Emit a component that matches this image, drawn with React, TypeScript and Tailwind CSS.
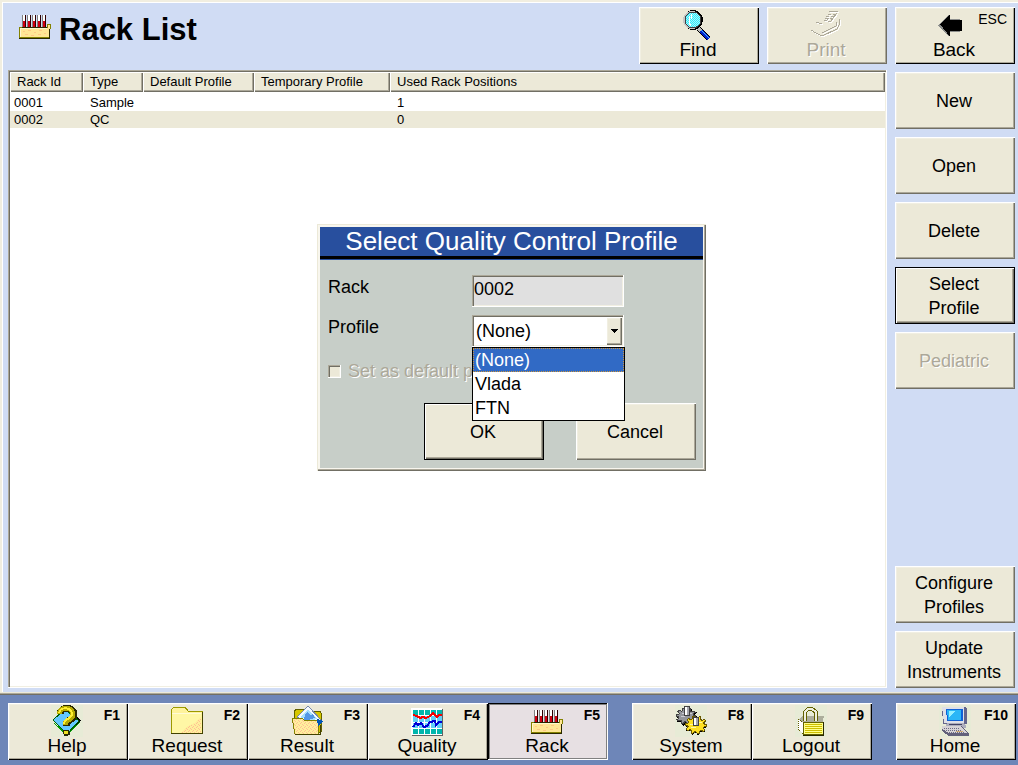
import { useState, type ReactNode } from 'react';
import clsx from 'clsx';

const racks = [
    { id: '0001', type: 'Sample', defaultProfile: '', temporaryProfile: '', used: 1 },
    { id: '0002', type: 'QC', defaultProfile: '', temporaryProfile: '', used: 0 },
];

const profiles = ['(None)', 'Vlada', 'FTN'];

const raised = 'shadow-[inset_1px_1px_0_#fff,inset_-1px_-1px_0_#716f64,inset_-2px_-2px_0_#aca899,inset_2px_2px_0_#f1efe2]';
const raisedBlack = 'shadow-[inset_1px_1px_0_#fff,inset_-1px_-1px_0_#000,inset_-2px_-2px_0_#aca899,inset_2px_2px_0_#f1efe2]';
const focused = 'shadow-[inset_0_0_0_1px_#000,inset_2px_2px_0_#fff,inset_-2px_-2px_0_#716f64,inset_-3px_-3px_0_#aca899]';
const pressed = 'shadow-[inset_-1px_-1px_0_#fff,inset_1px_1px_0_#000,inset_2px_2px_0_#808080,inset_-2px_-2px_0_#808080]';
const sunken = 'shadow-[inset_-1px_-1px_0_#fff,inset_1px_1px_0_#aca899,inset_2px_2px_0_#716f64,inset_-2px_-2px_0_#f1efe2]';
const disabledText = 'text-[#aca899] [text-shadow:1px_1px_0_#fff]';

function Icon({ children }: { children: ReactNode }) {
    return (
        <svg className="w-8 h-8 shrink-0" viewBox="0 0 32 32" fill="none" shapeRendering="crispEdges" aria-hidden="true">
            {children}
        </svg>
    );
}

function RackShape() {
    return (
        <>
            {[3, 8, 13, 18, 23].map((x) => (
                <g key={x}>
                    <path d={`M${x} 0h4v12h-4z`} fill="#808080" />
                    <path d={`M${x + 1} 0h2v6h-2z`} fill="#fff" />
                    <path d={`M${x + 1} 6h2v6h-2z`} fill="#d00010" />
                    <path d={`M${x + 3} 0h1v12h-1z`} fill="#300000" />
                </g>
            ))}
            <path d="M0 12h28V9h4v5h-1v10H0z" fill="#848200" />
            <path d="M1 13h28v-3h2v4h-1v8H1z" fill="#ffe794" />
            <path d="M1 13h27v1H2v8H1z" fill="#fff7ce" />
            <path d="M4 16h2v1H4zM9 15h3v1H9zM15 17h2v1h-2zM20 15h3v1h-3zM25 18h2v1h-2zM6 19h3v1H6zM12 20h3v1h-3zM19 19h3v1h-3z" fill="#ffc984" />
            <path d="M0 23h31v1H0zM30 14h1v9h-1zM3 12h25v1H3z" fill="#292800" />
        </>
    );
}

function FindIcon() {
    return (
        <Icon>
            <defs>
                <pattern id="lens" width="2" height="2" patternUnits="userSpaceOnUse">
                    <path d="M0 0h2v2H0z" fill="#31ebf7" />
                    <path d="M0 0h1v1H0zM1 1h1v1H1z" fill="#a5f7ff" />
                </pattern>
            </defs>
            <path d="M17 20l10 10" stroke="#000" strokeWidth="5" />
            <path d="M16 19l3 3" stroke="#bdbdbd" strokeWidth="3" />
            <path d="M19 22l8 8" stroke="#0020d0" strokeWidth="3" />
            <path d="M19 21l8 8" stroke="#4ab6ff" />
            <circle cx="11" cy="11" r="10" fill="#000" />
            <circle cx="10" cy="11" r="9" fill="#c6c7c6" />
            <circle cx="11" cy="11" r="8" fill="url(#lens)" stroke="#424142" />
            <path d="M7 7v7l2 3M9 5v5" stroke="#fff" />
        </Icon>
    );
}

function PrintIcon() {
    const lines = 'M1 21l5 3 6 3 15-7 2-4v-6M12 24l14-7v-4M6 13h3M9 14h3M16 12l3-3M19 2l9 1M18 5h3M23 5h3M16 7h3M21 7h3M15 9h3M20 9h3M14 11h2M18 12h3l6-8';
    return (
        <Icon>
            <path d={lines} transform="translate(1 1)" stroke="#fff" />
            <path d={lines} stroke="#aca899" />
        </Icon>
    );
}

function BackIcon() {
    return (
        <Icon>
            <path d="M0 16L11 5v5h11v13H11v5z" fill="#8c8e8c" />
            <path d="M2 15L12 5v6h12v11H12v6z" fill="#000" />
        </Icon>
    );
}

function HelpIcon() {
    return (
        <Icon>
            <path d="M0 0h32v32H0z" fill="#e7ebd6" />
            <path d="M1 15L14 3l16 12-14 15z" fill="#000" />
            <path d="M2 15L14 4l14 12-12 13z" fill="#63c7ff" stroke="#006100" />
            <path d="M3 18l13 12 13-13" stroke="#00a200" />
            <path d="M9 9c1-8 14-8 14 1 0 5-8 4-8 11" stroke="#292800" strokeWidth="7" />
            <path d="M8 9c1-8 14-8 14 1 0 5-8 4-8 10" stroke="#b5aa00" strokeWidth="5" />
            <path d="M8 8c1-6 12-7 13 1 0 5-8 4-8 10" stroke="#ffef31" strokeWidth="2" />
            <path d="M12 25h6v2h1v3h-2v1h-4v-2h-1z" fill="#292800" />
            <path d="M13 26h4v3h-4z" fill="#efdf21" />
        </Icon>
    );
}

function FolderPattern({ id }: { id: string }) {
    return (
        <pattern id={id} width="4" height="4" patternUnits="userSpaceOnUse">
            <path d="M0 0h4v4H0z" fill="#ffef9c" />
            <path d="M0 0h1v1H0zM2 1h1v1H2zM1 2h1v1H1zM3 3h1v1H3z" fill="#ffbf94" />
        </pattern>
    );
}

function RequestIcon() {
    return (
        <Icon>
            <defs>
                <FolderPattern id="folder" />
            </defs>
            <path d="M0 28V5l3-3h11l3 4h14v22z" fill="#fff39c" stroke="#9c9a00" />
            <path d="M1 28V8h29v20z" fill="#fff7a5" />
            <path d="M30 12v16H9l6-6 8-4z" fill="url(#folder)" />
            <path d="M0 28h32M31 7v22" stroke="#424100" />
            <path d="M1 8h29" stroke="#fffbd6" />
        </Icon>
    );
}

function ResultIcon() {
    return (
        <Icon>
            <defs>
                <FolderPattern id="result-folder" />
            </defs>
            <path d="M3 28V6l3-2h8l2 2h13l1 2v19z" fill="#d6c700" stroke="#636100" />
            <path d="M6 12L17 1l14 15-6 6z" fill="#f7fbff" stroke="#7386ad" />
            <path d="M9 12l8-8 9 10-7 2z" fill="#a5dfff" />
            <path d="M14 9l3-2 2 3 3-1 2 4-5 1-3 3-3-2z" fill="#5296e7" />
            <path d="M1 13h10l2 2h15l-1 14H4z" fill="url(#result-folder)" stroke="#848200" />
            <path d="M26 14l6 2-5 5z" fill="#0055b5" />
            <path d="M4 29h25V20" stroke="#424100" />
        </Icon>
    );
}

function QualityIcon() {
    return (
        <Icon>
            <path d="M1 4h31v27H1z" fill="#636563" />
            <path d="M0 3h31v27H0z" fill="#fff" />
            {[2, 8, 14, 20, 26].map((x) => (
                <g key={x}>
                    <path d={`M${x} 5h5v5h-5zM${x} 24h5v5h-5z`} fill="#00b6ad" />
                    <path d={`M${x} 11h5v6h-5zM${x} 18h5v5h-5z`} fill="#63cff7" />
                </g>
            ))}
            <path d="M2 10l4 1 3 2 3-1 3 1 4-2 3-3 4 4 2-2h3" stroke="#f70000" strokeWidth="2" />
            <path d="M2 22l3-4 2 2 3-2 3 4 3-1 3-4 5-1 1 4 3-3h3" stroke="#0000d6" strokeWidth="2" />
        </Icon>
    );
}

// Toothed wheel outline, squashed vertically so that it looks tilted
function gearPath(cx: number, cy: number, rx: number, ry: number, teeth = 10) {
    const points: string[] = [];
    for (let i = 0; i < teeth * 4; i++) {
        const angle = (i / (teeth * 4)) * Math.PI * 2;
        const k = i % 4 < 2 ? 1 : 0.75;
        points.push(`${(cx + Math.cos(angle) * rx * k).toFixed(1)} ${(cy + Math.sin(angle) * ry * k).toFixed(1)}`);
    }
    return `M${points.join('L')}z`;
}

function SystemIcon() {
    return (
        <Icon>
            <path d="M0 0h32v32H0z" fill="#e7ebd6" />
            <path d={gearPath(12, 12, 11, 9)} fill="#000" />
            <path d={gearPath(11, 11, 10, 8)} fill="#94969c" stroke="#424142" />
            <path d="M6 11h4M7 8h2M14 8h3" stroke="#ceced6" />
            <path d={gearPath(21, 21, 11, 9)} fill="#000" />
            <path d={gearPath(21, 20, 11, 9)} fill="#ffdf21" stroke="#6b5900" />
            <path d="M15 19h3M16 22h5M24 17h3" stroke="#fff7a5" />
            <path d="M9 1h6v10H9zM18 12h6v9h-6z" fill="#424142" />
            <path d="M10 2h2v8h-2zM19 13h2v7h-2z" fill="#fff" />
            <path d="M12 2h2v8h-2zM21 13h2v7h-2z" fill="#a5a6ad" />
        </Icon>
    );
}

function LogoutIcon() {
    return (
        <Icon>
            <path d="M0 0h32v32H0z" fill="#e7ebd6" />
            <path d="M3 15l5-4h21l-1 5v13H8l-5-5z" fill="#adae9c" />
            <path d="M10 16V7l3-3h4l4 3v9" stroke="#636100" strokeWidth="4" />
            <path d="M10 16V7l3-3h4l4 3v9" stroke="#efefde" strokeWidth="2" />
            <path d="M3 14l5 3v12l-5-5z" fill="#fff" stroke="#636100" strokeDasharray="1 1" />
            <path d="M8 17h20v12H8z" fill="#ffff8c" stroke="#636100" />
            <path d="M10 19h17M10 21h17M10 23h17M10 25h17M10 27h17" stroke="#cebe00" />
            <path d="M28 17v13H8" stroke="#292800" />
        </Icon>
    );
}

function HomeIcon() {
    return (
        <Icon>
            <path d="M0 0h32v32H0z" fill="#e7ebd6" />
            <path d="M3 2h23l2 2v15H4z" fill="#63658c" />
            <path d="M3 2h22v16H5z" fill="#dedfe7" />
            <path d="M7 4h17v12H8z" fill="#1061d6" />
            <path d="M8 5h14v10H9z" fill="#29b6f7" />
            <path d="M10 6h6l-5 6h-1z" fill="#94efff" />
            <path d="M8 18h16l3 3v2H6z" fill="#adaebd" />
            <path d="M10 19h13v1H10z" fill="#424163" />
            <path d="M3 21h20l7 8v2H10l-7-5z" fill="#63617b" />
            <path d="M3 21h18l7 7H10l-7-4z" fill="#d6d3d6" />
            <path d="M5 23h16M7 25h16M10 27h16" stroke="#6b6984" strokeDasharray="1 1" />
            <path d="M17 26h7" stroke="#ceaa73" />
        </Icon>
    );
}

interface ToolButtonProps {
    label: string;
    icon: ReactNode;
    hotkey?: string;
    active?: boolean;
    disabled?: boolean;
    boldKey?: boolean;
}

function ToolButton({ label, icon, hotkey, active, disabled, boldKey }: ToolButtonProps) {
    return (
        <button
            type="button"
            disabled={disabled}
            className={clsx(
                'relative w-[120px] h-[57px] pt-0.5 pr-0.5 flex flex-col items-center text-[19px] leading-[18px]',
                active ? 'bg-[#e7e0e3]' : 'bg-[#ece9d8]',
                active ? pressed : disabled ? raised : raisedBlack,
                disabled && disabledText,
            )}
        >
            {icon}
            {label}
            {hotkey && (
                <span className={clsx('absolute top-[3px] right-2 text-sm leading-[18px]', boldKey && 'font-bold')}>{hotkey}</span>
            )}
        </button>
    );
}

interface SideButtonProps {
    label: string;
    selected?: boolean;
    disabled?: boolean;
    className?: string;
}

function SideButton({ label, selected, disabled, className }: SideButtonProps) {
    return (
        <button
            type="button"
            disabled={disabled}
            className={clsx(
                'w-[120px] h-[57px] pl-1.5 pr-2 bg-[#ece9d8] text-lg leading-6 whitespace-pre-line',
                selected ? focused : raised,
                disabled && disabledText,
                className,
            )}
        >
            {label}
        </button>
    );
}

function RackTable() {
    const head = 'h-5 pl-[7px] pb-px text-left font-normal bg-[#ece9d8] shadow-[inset_1px_1px_0_#fff,inset_-1px_-1px_0_#716f64,inset_-2px_-2px_0_#aca899]';
    return (
        <div className={clsx('flex-1 mt-1.5 p-0.5 bg-white overflow-hidden', sunken)}>
            <table className="w-full table-fixed border-collapse text-[13px] leading-[17px]">
                <colgroup>
                    <col className="w-[73px]" />
                    <col className="w-[60px]" />
                    <col className="w-[111px]" />
                    <col className="w-[136px]" />
                    <col />
                </colgroup>
                <thead>
                    <tr>
                        <th className={head}>Rack Id</th>
                        <th className={head}>Type</th>
                        <th className={head}>Default Profile</th>
                        <th className={head}>Temporary Profile</th>
                        <th className={head}>Used Rack Positions</th>
                    </tr>
                </thead>
                <tbody className="before:block before:h-0.5">
                    {racks.map((rack) => (
                        <tr key={rack.id} className={rack.id === '0002' ? 'bg-[#ece9d8]' : undefined}>
                            <td className="p-0 pl-1">{rack.id}</td>
                            <td className="p-0 pl-[7px]">{rack.type}</td>
                            <td className="p-0 pl-[7px]">{rack.defaultProfile}</td>
                            <td className="p-0 pl-[7px]">{rack.temporaryProfile}</td>
                            <td className="p-0 pl-[7px]">{rack.used}</td>
                        </tr>
                    ))}
                </tbody>
            </table>
        </div>
    );
}

function ProfileDialog() {
    const [profile, setProfile] = useState('(None)');
    const [open, setOpen] = useState(true);

    return (
        <div
            role="dialog"
            aria-labelledby="dialog-title"
            className="w-[389px] p-[3px] bg-[#c7cec8] shadow-[inset_1px_1px_0_#ece9d8,inset_-1px_-1px_0_#716f64,inset_-2px_-2px_0_#aca899,inset_0_0_0_3px_#f8f6ee]"
        >
            <div className="bg-[#284f9e] pb-px">
                <h2 id="dialog-title" className="border-b-3 border-black text-white text-center text-[26px] leading-[29px] whitespace-nowrap">
                    Select Quality Control Profile
                </h2>
            </div>
            <div className="pl-2 pr-[7px] pt-[15px] pb-2">
                <div className="grid grid-cols-[144px_152px] gap-y-2 items-start text-lg leading-6">
                    <label htmlFor="rack">Rack</label>
                    <input id="rack" readOnly value="0002" className={clsx('w-full h-8 px-0.5 pb-1 bg-[#e0e0e0] outline-none', sunken)} />
                    <label htmlFor="profile">Profile</label>
                    <div className="relative">
                        <select
                            id="profile"
                            value={profile}
                            onChange={(e) => setProfile(e.target.value)}
                            onMouseDown={(e) => {
                                e.preventDefault();
                                setOpen(!open);
                            }}
                            className={clsx('block appearance-none w-full h-8 pl-1 bg-white outline-none', sunken)}
                        >
                            {profiles.map((p) => (
                                <option key={p}>{p}</option>
                            ))}
                        </select>
                        <span className={clsx('absolute right-0.5 top-0.5 bottom-0.5 w-4 flex items-center justify-center bg-[#ece9d8] pointer-events-none', raised)}>
                            <svg className="w-[7px] h-1" viewBox="0 0 7 4" shapeRendering="crispEdges">
                                <path d="M0 0h7v1H6v1H5v1H4v1H3V3H2V2H1V1H0z" fill="#000" />
                            </svg>
                        </span>
                        {open && (
                            <ul role="listbox" className="absolute top-full left-0 w-[153px] border border-black bg-white z-10">
                                {profiles.map((p) => (
                                    <li
                                        key={p}
                                        role="option"
                                        aria-selected={p === profile}
                                        onClick={() => {
                                            setProfile(p);
                                            setOpen(false);
                                        }}
                                        className={clsx('h-6 pl-0.5', p === profile && 'bg-[#316ac5] text-white outline-1 -outline-offset-1 outline-dotted outline-[#ce953a]')}
                                    >
                                        {p}
                                    </li>
                                ))}
                            </ul>
                        )}
                    </div>
                </div>
                <label className={clsx('mt-3 flex items-center gap-[7px] text-lg leading-6', disabledText)}>
                    <input type="checkbox" disabled className={clsx('appearance-none w-[13px] h-[13px] bg-[#ece9d8]', sunken)} />
                    Set as default profile
                </label>
                <div className="mt-5 flex justify-end gap-8">
                    <SideButton label="OK" selected />
                    <SideButton label="Cancel" />
                </div>
            </div>
        </div>
    );
}

export default function App() {
    return (
        <div className="min-h-screen flex flex-col bg-[#d0dcf4] text-black font-['Liberation_Sans',Arial,sans-serif]">
            <main className="relative flex-1 flex gap-2 pt-[7px] pb-[7px] pl-2 pr-[3px] shadow-[inset_0_-1px_0_#716f64,inset_0_-2px_0_#aca899,inset_0_-3px_0_#ece9d8,inset_2px_2px_0_#f1eee0,inset_3px_3px_0_#fff]">
                <section className="flex-1 min-w-0 flex flex-col">
                    <header className="flex items-start gap-2">
                        <h1 className="flex-1 pl-[11px] pt-2 flex gap-2 text-[31px] leading-[30px] font-bold whitespace-nowrap">
                            <svg className="w-8 h-6" viewBox="0 0 32 24" shapeRendering="crispEdges" aria-hidden="true">
                                <RackShape />
                            </svg>
                            Rack List
                        </h1>
                        <ToolButton label="Find" icon={<FindIcon />} />
                        <ToolButton label="Print" icon={<PrintIcon />} disabled />
                    </header>
                    <RackTable />
                </section>

                <aside className="flex flex-col gap-2">
                    <ToolButton label="Back" icon={<BackIcon />} hotkey="ESC" />
                    <SideButton label="New" />
                    <SideButton label="Open" />
                    <SideButton label="Delete" />
                    <SideButton label={'Select\nProfile'} selected />
                    <SideButton label="Pediatric" disabled />
                    <SideButton label={'Configure\nProfiles'} className="mt-auto" />
                    <SideButton label={'Update\nInstruments'} />
                </aside>

                <div className="absolute inset-0 flex items-center justify-center py-[7px] pl-2 pr-[3px] pointer-events-none">
                    <div className="pointer-events-auto">
                        <ProfileDialog />
                    </div>
                </div>
            </main>

            <nav className="flex pt-2 pb-[5px] pl-2 pr-0.5 bg-[#6e86b8]">
                <ToolButton label="Help" icon={<HelpIcon />} hotkey="F1" boldKey />
                <ToolButton label="Request" icon={<RequestIcon />} hotkey="F2" boldKey />
                <ToolButton label="Result" icon={<ResultIcon />} hotkey="F3" boldKey />
                <ToolButton label="Quality" icon={<QualityIcon />} hotkey="F4" boldKey />
                <ToolButton
                    label="Rack"
                    icon={
                        <Icon>
                            <g transform="translate(0 5)">
                                <RackShape />
                            </g>
                        </Icon>
                    }
                    hotkey="F5"
                    active
                    boldKey
                />
                <div className="flex pl-6">
                    <ToolButton label="System" icon={<SystemIcon />} hotkey="F8" boldKey />
                    <ToolButton label="Logout" icon={<LogoutIcon />} hotkey="F9" boldKey />
                </div>
                <div className="ml-auto">
                    <ToolButton label="Home" icon={<HomeIcon />} hotkey="F10" boldKey />
                </div>
            </nav>
        </div>
    );
}
